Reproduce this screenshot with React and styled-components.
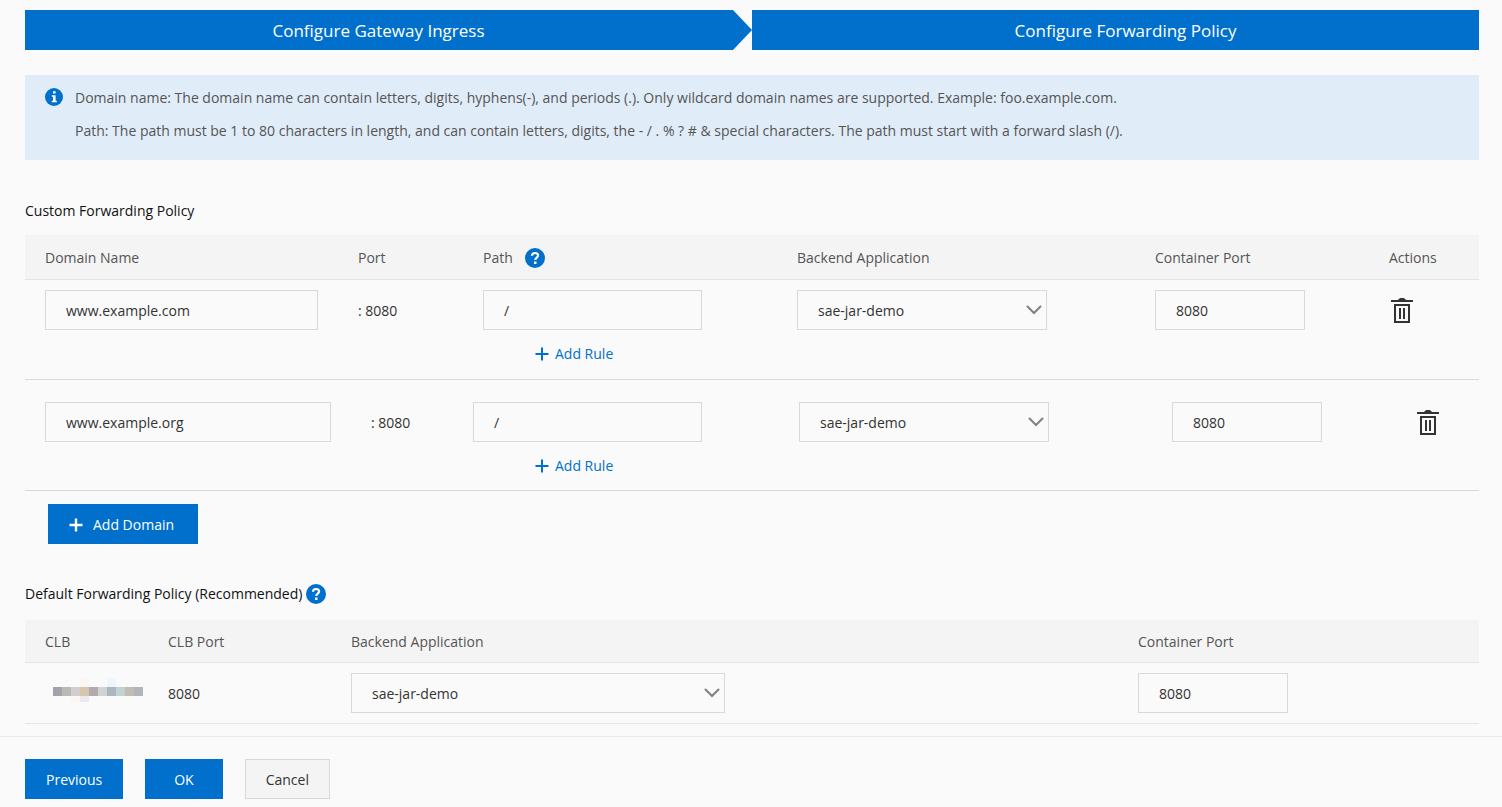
import React, { useState } from "react";
import styled, { createGlobalStyle } from "styled-components";

const firstColumns = [313, 125, 314, 358, 234, 110];
const nextColumns = [326, 102, 326, 373, 243, 84];
const defaultColumns = [123, 183, 787, 361];

const initialDomains = [
  { id: 1, domain: "www.example.com", path: "/", port: "8080" },
  { id: 2, domain: "www.example.org", path: "/", port: "8080" },
];

// pixelated CLB address: x, y, color
const mosaic = [
  [0, 9, "#a3a2a8"],
  [9, 9, "#b8bab3"],
  [18, 9, "#d2cdd0"],
  [27, 9, "#d5c6ae"],
  [36, 9, "#b5a9b0"],
  [45, 9, "#d1d2d4"],
  [54, 9, "#abb7c0"],
  [63, 9, "#c2d2d1"],
  [72, 9, "#c0bdb2"],
  [81, 9, "#afb5b9"],
  [27, 0, "#f9f6f3"],
  [54, 0, "#eff5f9"],
  [18, 18, "#f9f6f4"],
  [27, 18, "#e9e9ef"],
];

const HelpIcon = () => (
  <Icon width="20" height="20" viewBox="0 0 20 20" aria-hidden="true">
    <circle cx="10" cy="10" r="10" fill="#0070cc" />
    <path
      d="M7 7.8C7 5.8 8.4 5 10.1 5s3 1 3 2.6c0 2.1-2.8 2.1-2.8 4.4"
      fill="none"
      stroke="#fff"
      strokeWidth="2.2"
    />
    <rect x="9" y="13.5" width="2.5" height="2.5" fill="#fff" />
  </Icon>
);

const InfoIcon = () => (
  <Icon width="18" height="18" viewBox="0 0 18 18" aria-hidden="true">
    <circle cx="9" cy="9" r="9" fill="#0070cc" />
    <path
      d="M8 3.2h2.6v2.3H8zM6.8 7.2h3.8v5.6h1.2v1.5H6.8v-1.5H8V8.7H6.8z"
      fill="#fff"
    />
  </Icon>
);

const PlusIcon = ({ heavy }) => (
  <Icon width="14" height="14" viewBox="0 0 14 14" aria-hidden="true">
    <path
      d="M7 0.5v13M0.5 7h13"
      stroke="currentColor"
      strokeWidth={heavy ? 2.4 : 2}
    />
  </Icon>
);

const TrashIcon = () => (
  <Icon width="22" height="26" viewBox="0 0 22 26" aria-hidden="true">
    <path d="M0 3h7.2c.5-1.4 1.6-2 3.8-2s3.3.6 3.8 2H22v2H0z" fill="#333" />
    <rect
      x="4"
      y="8"
      width="14"
      height="17"
      fill="none"
      stroke="#333"
      strokeWidth="2"
    />
    <path d="M9 11v11M13 11v11" stroke="#333" strokeWidth="2" />
  </Icon>
);

const AppSelect = ({ label, width }) => (
  <SelectBox $width={width}>
    <Select aria-label={label} defaultValue="sae-jar-demo">
      <option>sae-jar-demo</option>
    </Select>
    <Chevron width="16" height="10" viewBox="0 0 16 10" aria-hidden="true">
      <path
        d="M1.5 1.5l6.5 6.5 6.5-6.5"
        fill="none"
        stroke="#808080"
        strokeWidth="2"
        strokeLinecap="round"
      />
    </Chevron>
  </SelectBox>
);

const Columns = ({ widths }) => (
  <colgroup>
    {widths.map((width, i) => (
      <Col key={i} $width={width} />
    ))}
  </colgroup>
);

const DomainTable = ({ item, first, onRemove }) => (
  <Table>
    <Columns widths={first ? firstColumns : nextColumns} />
    {first && (
      <thead>
        <tr>
          <Th>Domain Name</Th>
          <Th>Port</Th>
          <Th>
            <PathTitle>
              Path <HelpIcon />
            </PathTitle>
          </Th>
          <Th>Backend Application</Th>
          <Th>Container Port</Th>
          <Th>Actions</Th>
        </tr>
      </thead>
    )}
    <tbody>
      <Row $first={first}>
        <Td>
          <Input aria-label="Domain Name" defaultValue={item.domain} />
        </Td>
        <Td>
          <CellText>: 8080</CellText>
        </Td>
        <Td>
          <Input aria-label="Path" defaultValue={item.path} $width="80%" />
          <AddRule type="button" $indent={first ? 52 : 62}>
            <PlusIcon /> Add Rule
          </AddRule>
        </Td>
        <Td>
          <AppSelect label="Backend Application" width="250px" />
        </Td>
        <Td>
          <Input
            aria-label="Container Port"
            defaultValue={item.port}
            $width="150px"
          />
        </Td>
        <Td>
          <RemoveButton
            type="button"
            aria-label={`Delete ${item.domain}`}
            onClick={() => onRemove(item.id)}
          >
            <TrashIcon />
          </RemoveButton>
        </Td>
      </Row>
    </tbody>
  </Table>
);

const App = () => {
  const [domains, setDomains] = useState(initialDomains);

  const addDomain = () => {
    setDomains([
      ...domains,
      { id: Date.now(), domain: "", path: "/", port: "8080" },
    ]);
  };

  const removeDomain = (id) => {
    setDomains(domains.filter((item) => item.id !== id));
  };

  return (
    <>
      <GlobalStyle />
      <Content>
        <Steps>
          <Step $arrow>Configure Gateway Ingress</Step>
          <Step>Configure Forwarding Policy</Step>
        </Steps>

        <Notice>
          <InfoIcon />
          <NoticeText>
            <p>
              Domain name: The domain name can contain letters, digits,
              hyphens(-), and periods (.). Only wildcard domain names are
              supported. Example: foo.example.com.
            </p>
            <p>
              Path: The path must be 1 to 80 characters in length, and can
              contain letters, digits, the - / . % ? # &amp; special characters.
              The path must start with a forward slash (/).
            </p>
          </NoticeText>
        </Notice>

        <Title>Custom Forwarding Policy</Title>
        {domains.map((item, i) => (
          <DomainTable
            key={item.id}
            item={item}
            first={i === 0}
            onRemove={removeDomain}
          />
        ))}
        <AddDomain type="button" onClick={addDomain}>
          <PlusIcon heavy /> Add Domain
        </AddDomain>

        <Title $spaced>
          Default Forwarding Policy (Recommended)
          <HelpIcon />
        </Title>
        <Table>
          <Columns widths={defaultColumns} />
          <thead>
            <tr>
              <Th $compact>CLB</Th>
              <Th $compact>CLB Port</Th>
              <Th $compact>Backend Application</Th>
              <Th $compact>Container Port</Th>
            </tr>
          </thead>
          <tbody>
            <DefaultRow>
              <Td>
                <Mosaic width="90" height="24" viewBox="0 0 90 24">
                  {mosaic.map(([x, y, color]) => (
                    <rect
                      key={`${x}-${y}`}
                      x={x}
                      y={y}
                      width="9"
                      height={y === 18 ? 6 : 9}
                      fill={color}
                    />
                  ))}
                </Mosaic>
              </Td>
              <Td>
                <CellText>8080</CellText>
              </Td>
              <Td>
                <AppSelect label="Default Backend Application" width="50%" />
              </Td>
              <Td>
                <Input
                  aria-label="Default Container Port"
                  defaultValue="8080"
                  $width="150px"
                />
              </Td>
            </DefaultRow>
          </tbody>
        </Table>
      </Content>

      <Footer>
        <Button type="button">Previous</Button>
        <Button type="button" $wide>
          OK
        </Button>
        <CancelButton type="button">Cancel</CancelButton>
      </Footer>
    </>
  );
};

const GlobalStyle = createGlobalStyle`
  * {
    box-sizing: border-box;
  }

  body {
    margin: 0;
    background: #fafafa;
    color: #333;
    font-family: "Open Sans", "Noto Sans", sans-serif;
    font-size: 14px;
    line-height: 20px;
  }

  button,
  input,
  select {
    font: inherit;
    color: inherit;
  }

  p {
    margin: 0;
  }
`;

const Icon = styled.svg`
  display: block;
  flex: none;
`;

const Content = styled.main`
  padding: 10px 23px 12px 25px;
`;

const Steps = styled.div`
  display: grid;
  grid-template-columns: 1fr 1fr;
`;

const Step = styled.div`
  height: 40px;
  padding: ${(props) => (props.$arrow ? "0 20px 0 0" : "0 0 0 20px")};
  background: #0070cc;
  color: #fff;
  font-size: 17px;
  line-height: 42px;
  text-align: center;
  clip-path: ${(props) =>
    props.$arrow
      ? "polygon(0 0, calc(100% - 19px) 0, 100% 50%, calc(100% - 19px) 100%, 0 100%)"
      : "none"};
`;

const Notice = styled.div`
  display: flex;
  gap: 12px;
  margin-top: 25px;
  padding: 13px 20px 19px;
  background: #e0ecf8;
  color: #555;
`;

const NoticeText = styled.div`
  display: flex;
  flex-direction: column;
  gap: 13px;
`;

const Title = styled.h2`
  display: flex;
  align-items: center;
  gap: 4px;
  margin: ${(props) => (props.$spaced ? "40px 0 16px" : "41px 0 14px")};
  color: #111;
  font-size: 14px;
  font-weight: 400;
  line-height: 20px;
`;

const Table = styled.table`
  width: 100%;
  table-layout: fixed;
  border-spacing: 0;
`;

const Col = styled.col`
  width: ${(props) => props.$width}px;
`;

const Th = styled.th`
  height: ${(props) => (props.$compact ? "43px" : "45px")};
  padding: 1px 20px 0;
  border-bottom: 1px solid #e3e4e6;
  background: #f4f4f4;
  color: #555;
  font-weight: 400;
  text-align: left;
  white-space: nowrap;
`;

const PathTitle = styled.span`
  display: flex;
  align-items: center;
  gap: 12px;
`;

const Td = styled.td`
  padding: 10px 20px;
  vertical-align: top;
`;

const Row = styled.tr`
  td {
    padding-top: ${(props) => (props.$first ? "10px" : "22px")};
    padding-bottom: ${(props) => (props.$first ? "15px" : "14px")};
    border-bottom: 1px solid #d9d9d9;
  }
`;

const DefaultRow = styled.tr`
  td {
    border-bottom: 1px solid #e3e4e6;
  }
`;

const CellText = styled.div`
  height: 40px;
  line-height: 42px;
`;

const Input = styled.input`
  display: block;
  width: ${(props) => props.$width || "100%"};
  height: 40px;
  padding: 0 20px;
  border: 1px solid #d9d9d9;
  border-radius: 0;
  background: transparent;
`;

const SelectBox = styled.div`
  position: relative;
  width: ${(props) => props.$width};
`;

const Select = styled.select`
  display: block;
  width: 100%;
  height: 40px;
  padding: 1px 32px 0 20px;
  border: 1px solid #d9d9d9;
  border-radius: 0;
  background: transparent;
  appearance: none;
`;

const Chevron = styled.svg`
  position: absolute;
  top: 15px;
  right: 5px;
  pointer-events: none;
`;

const AddRule = styled.button`
  display: flex;
  align-items: center;
  gap: 6px;
  margin: 14px 0 0 ${(props) => props.$indent}px;
  padding: 0;
  border: none;
  background: none;
  color: #0070cc;
  cursor: pointer;
`;

const RemoveButton = styled.button`
  display: flex;
  align-items: center;
  height: 40px;
  padding: 0 2px;
  border: none;
  background: none;
  cursor: pointer;
`;

const Button = styled.button`
  height: 40px;
  padding: 1px ${(props) => (props.$wide ? "28px" : "20px")} 0;
  border: 1px solid #0070cc;
  background: #0070cc;
  color: #fff;
  cursor: pointer;
`;

const AddDomain = styled(Button)`
  display: flex;
  align-items: center;
  gap: 10px;
  min-width: 150px;
  margin: 13px 0 0 23px;
`;

const CancelButton = styled(Button)`
  border-color: #d9d9d9;
  background: #f4f4f4;
  color: #333;
`;

const Mosaic = styled.svg`
  display: block;
  margin: 5px 0 0 8px;
`;

const Footer = styled.footer`
  display: flex;
  gap: 22px;
  padding: 22px 25px 8px;
  border-top: 1px solid #e8e8e8;
`;

export default App;
